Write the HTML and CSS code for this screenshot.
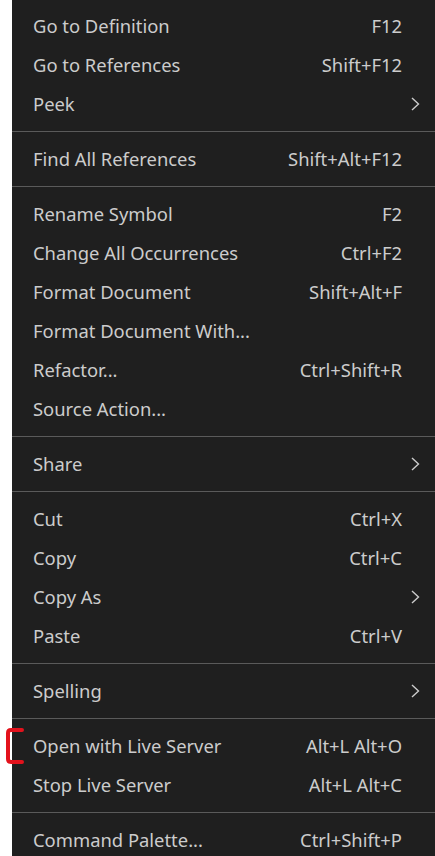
FILE: index.html
```html
<!DOCTYPE html>
<html>
<head>
<meta charset="utf-8">
<link rel="stylesheet" href="styles.css">
</head>
<body>
<div class="menu">
  <div class="item"><span class="label">Go to Definition</span><span class="key">F12</span></div>
  <div class="item"><span class="label">Go to References</span><span class="key">Shift+F12</span></div>
  <div class="item"><span class="label">Peek</span><span class="sub"><svg width="9" height="14" viewBox="0 0 9 14"><path d="M1 1 L7.5 7 L1 13" fill="none" stroke="#cccccc" stroke-width="1.4"/></svg></span></div>
  <div class="sep"></div>
  <div class="item"><span class="label">Find All References</span><span class="key">Shift+Alt+F12</span></div>
  <div class="sep"></div>
  <div class="item"><span class="label">Rename Symbol</span><span class="key">F2</span></div>
  <div class="item"><span class="label">Change All Occurrences</span><span class="key">Ctrl+F2</span></div>
  <div class="item"><span class="label">Format Document</span><span class="key">Shift+Alt+F</span></div>
  <div class="item"><span class="label">Format Document With...</span></div>
  <div class="item"><span class="label">Refactor...</span><span class="key">Ctrl+Shift+R</span></div>
  <div class="item"><span class="label">Source Action...</span></div>
  <div class="sep"></div>
  <div class="item"><span class="label">Share</span><span class="sub"><svg width="9" height="14" viewBox="0 0 9 14"><path d="M1 1 L7.5 7 L1 13" fill="none" stroke="#cccccc" stroke-width="1.4"/></svg></span></div>
  <div class="sep"></div>
  <div class="item"><span class="label">Cut</span><span class="key">Ctrl+X</span></div>
  <div class="item"><span class="label">Copy</span><span class="key">Ctrl+C</span></div>
  <div class="item"><span class="label">Copy As</span><span class="sub"><svg width="9" height="14" viewBox="0 0 9 14"><path d="M1 1 L7.5 7 L1 13" fill="none" stroke="#cccccc" stroke-width="1.4"/></svg></span></div>
  <div class="item"><span class="label">Paste</span><span class="key">Ctrl+V</span></div>
  <div class="sep"></div>
  <div class="item"><span class="label">Spelling</span><span class="sub"><svg width="9" height="14" viewBox="0 0 9 14"><path d="M1 1 L7.5 7 L1 13" fill="none" stroke="#cccccc" stroke-width="1.4"/></svg></span></div>
  <div class="sep"></div>
  <div class="item marked"><span class="label">Open with Live Server</span><span class="key">Alt+L Alt+O</span>
    <svg class="bracket" width="22" height="38" viewBox="0 0 22 38"><path d="M19 3 H8 Q5 3 5 6 V32 Q5 35 8 35 H19" fill="none" stroke="#e3121c" stroke-width="4" stroke-linecap="round"/></svg>
  </div>
  <div class="item"><span class="label">Stop Live Server</span><span class="key">Alt+L Alt+C</span></div>
  <div class="sep"></div>
  <div class="item"><span class="label">Command Palette...</span><span class="key">Ctrl+Shift+P</span></div>
</div>
</body>
</html>
```
FILE: styles.css
```css
html, body {
  margin: 0;
  padding: 0;
  background: #ffffff;
  height: 100%;
  overflow: hidden;
}
body {
  padding-left: 12px;
}
.menu {
  background: #1f1f1f;
  color: #cccccc;
  font-family: "Noto Sans", "Open Sans", sans-serif;
  font-size: 18.4px;
  padding-top: 6.5px;
  height: 100vh;
  box-sizing: border-box;
}
.item {
  position: relative;
  display: flex;
  align-items: center;
  justify-content: space-between;
  height: 39px;
  padding-left: 21px;
  padding-right: 33px;
  line-height: 1;
  box-sizing: border-box;
}
.label {
  white-space: nowrap;
}
.key {
  white-space: nowrap;
}
.sub {
  display: flex;
  align-items: center;
  margin-right: -18px;
}
.sep {
  height: 1px;
  background: #5a5a5a;
  margin: 7px 0 8px;
}
.bracket {
  position: absolute;
  left: -9px;
  top: 0px;
}
```
